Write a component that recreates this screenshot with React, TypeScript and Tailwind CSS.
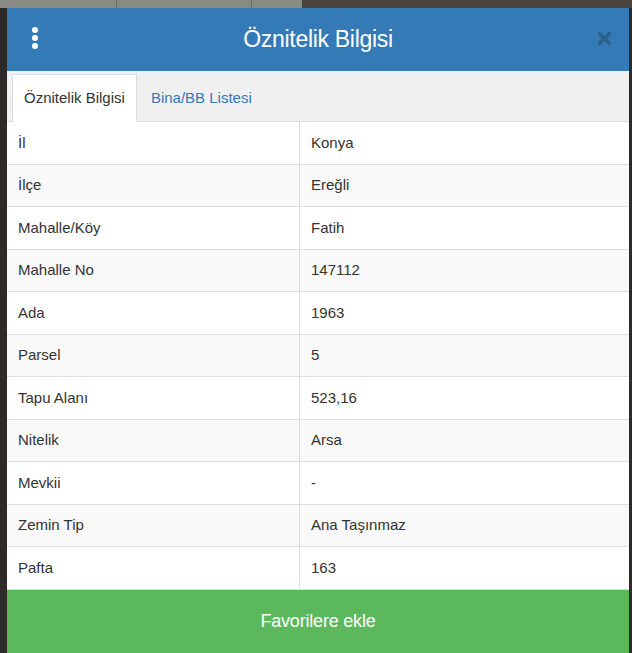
import { useState } from "react";

const ROWS: [string, string][] = [
  ["İl", "Konya"],
  ["İlçe", "Ereğli"],
  ["Mahalle/Köy", "Fatih"],
  ["Mahalle No", "147112"],
  ["Ada", "1963"],
  ["Parsel", "5"],
  ["Tapu Alanı", "523,16"],
  ["Nitelik", "Arsa"],
  ["Mevkii", "-"],
  ["Zemin Tip", "Ana Taşınmaz"],
  ["Pafta", "163"],
];

export default function App() {
  const [tab, setTab] = useState(0);

  return (
    <div className="relative h-[653px] w-[632px] overflow-hidden bg-[#2e2a28] font-['Liberation_Sans',Arial,sans-serif]">
      {/* map toolbar peeking out behind the dialog */}
      <div className="absolute left-0 top-0 flex h-[8px] w-[302px]">
        <div className="w-[117px] border-r border-[#6f6f6a] bg-[#8a8a85]" />
        <div className="w-[135px] border-r border-[#6f6f6a] bg-[#8a8a85]" />
        <div className="w-[50px] bg-[#8a8a85]" />
      </div>
      <div className="absolute left-[302px] top-0 h-[8px] w-[330px] bg-[#4a4440]" />

      <div className="absolute left-[7px] top-[8px] flex w-[622px] flex-col bg-white">
        {/* header */}
        <div className="relative flex h-[63px] items-center justify-center bg-[#337ab7]">
          <div className="absolute left-[25px] top-[19px] flex flex-col gap-[2px]">
            <span className="h-[6px] w-[6px] rounded-full bg-white" />
            <span className="h-[6px] w-[6px] rounded-full bg-white" />
            <span className="h-[6px] w-[6px] rounded-full bg-white" />
          </div>
          <h1 className="text-[23px] tracking-[-0.3px] text-white">Öznitelik Bilgisi</h1>
          <svg
            className="absolute right-[17px] top-[23px]"
            width="15"
            height="15"
            viewBox="0 0 15 15"
          >
            <path
              d="M2.5 2.5 L12.5 12.5 M12.5 2.5 L2.5 12.5"
              stroke="#2a5f8e"
              strokeWidth="3.6"
              strokeLinecap="round"
            />
          </svg>
        </div>

        {/* tabs */}
        <div className="flex h-[51px] items-end border-b border-[#dddddd] bg-[#f0f0f0] pl-[5px]">
          {["Öznitelik Bilgisi", "Bina/BB Listesi"].map((t, i) => (
            <button
              key={t}
              type="button"
              onClick={() => setTab(i)}
              className={`-mb-px mr-[2px] flex h-[48px] items-center px-[11px] text-[15px] ${
                tab === i
                  ? "border border-b-0 border-[#dddddd] bg-white text-[#333333]"
                  : "border border-transparent text-[#337ab7]"
              }`}
            >
              {t}
            </button>
          ))}
        </div>

        {/* attribute table */}
        <div className="flex flex-col">
          {ROWS.map(([k, v], i) => (
            <div
              key={k}
              className={`grid h-[42.5px] grid-cols-[293px_1fr] border-b border-[#dddddd] text-[15px] text-[#333333] ${
                i % 2 === 1 ? "bg-[#f9f9f9]" : "bg-white"
              }`}
            >
              <div className="flex items-center border-r border-[#dddddd] pl-[11px]">{k}</div>
              <div className="flex items-center pl-[11px]">{v}</div>
            </div>
          ))}
        </div>

        <button
          type="button"
          className="flex h-[64px] items-center justify-center bg-[#5cb85c] text-[18px] tracking-[-0.2px] text-white"
        >
          Favorilere ekle
        </button>
      </div>
    </div>
  );
}
